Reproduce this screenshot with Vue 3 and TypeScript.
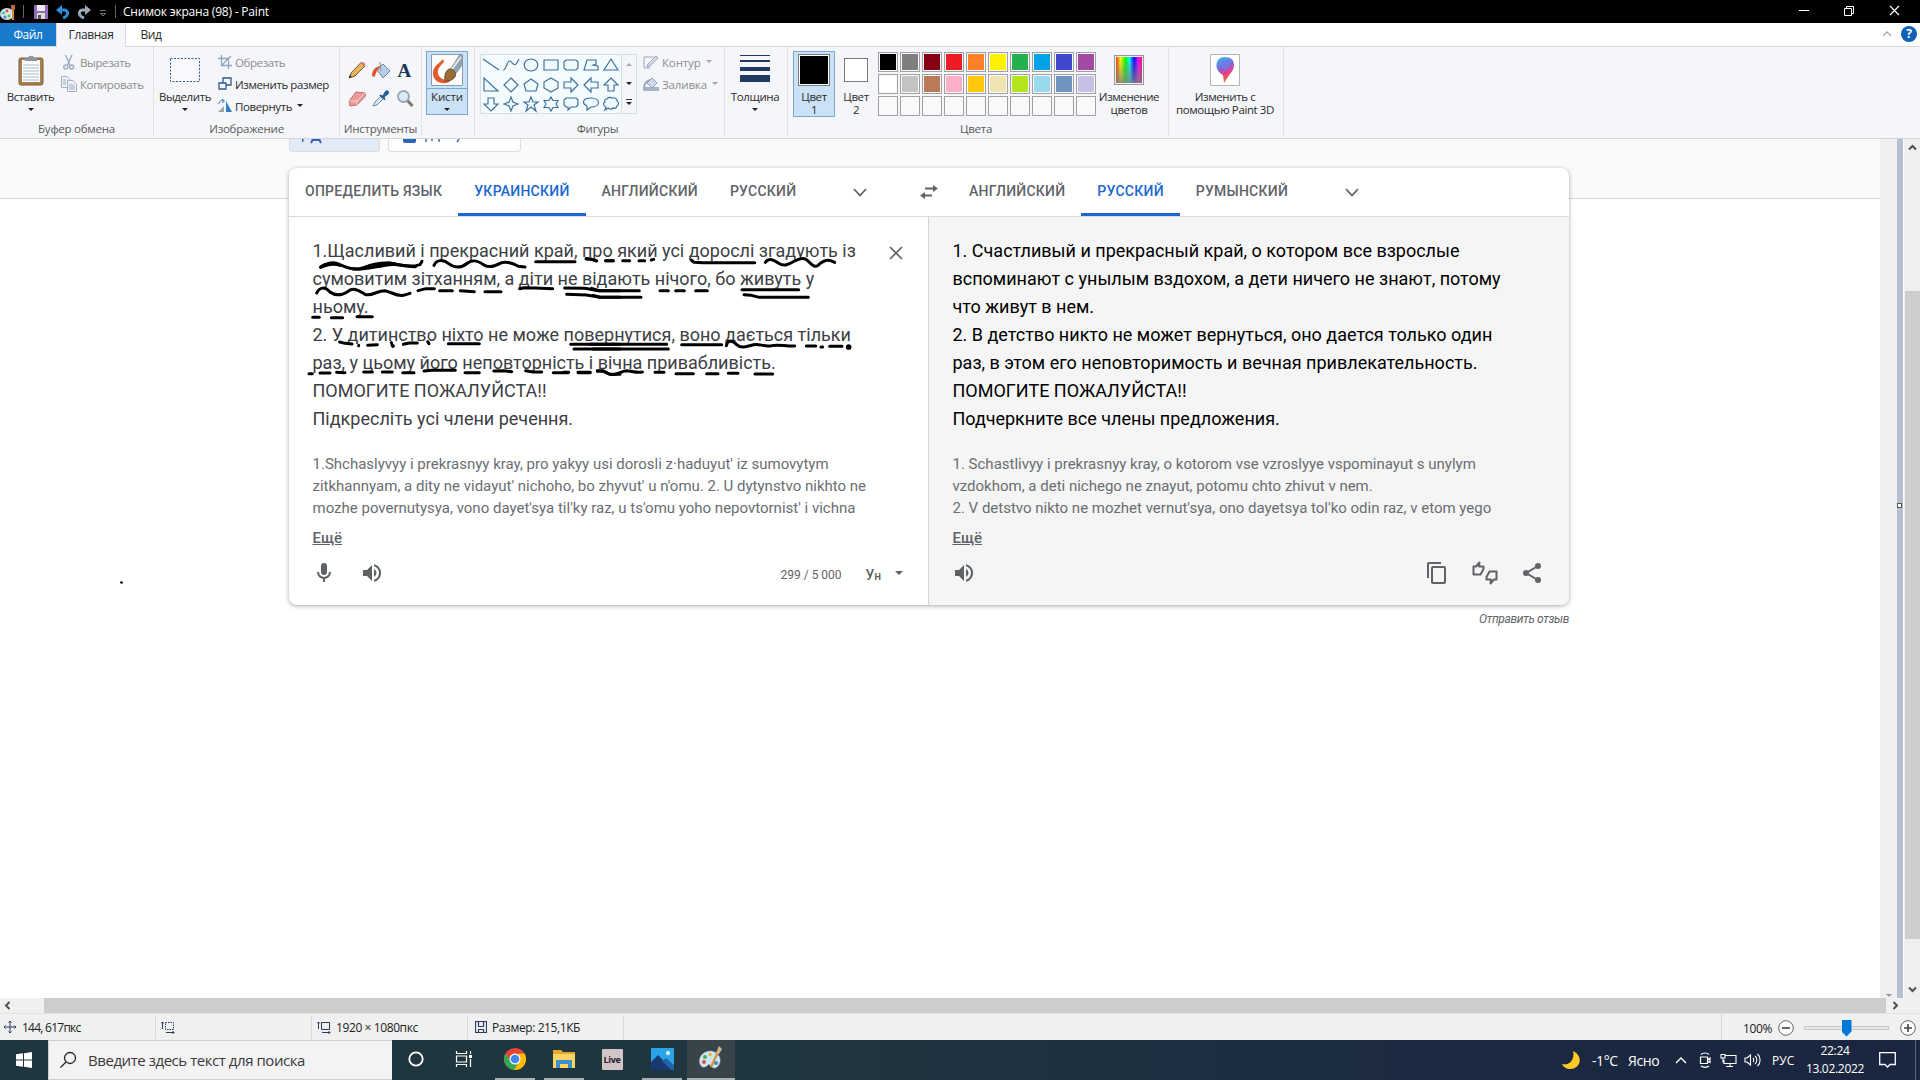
<script setup lang="ts">
const palette: string[][] = [
  ['#000000', '#7f7f7f', '#880015', '#ed1c24', '#ff7f27', '#fff200', '#22b14c', '#00a2e8', '#3f48cc', '#a349a4'],
  ['#ffffff', '#c3c3c3', '#b97a57', '#ffaec9', '#ffc90e', '#efe4b0', '#b5e61d', '#99d9ea', '#7092be', '#c8bfe7'],
  ['', '', '', '', '', '', '', '', '', ''],
]

const shapes: string[] = [
  'M2 4L18 15',
  'M2 15C5 16 6 5 9 6S13 15 18 4',
  'M10 4C19 4 19 16 10 16S1 4 10 4Z',
  'M3 5H17V15H3Z',
  'M5 5H15L17 7V13L15 15H5L3 13V7Z',
  'M6 5H15V9L12 10L17 11V15H3Z',
  'M10 4L17 15H3Z',
  'M3 3V16H17Z',
  'M10 3L17 10L10 17L3 10Z',
  'M10 4L17 9L15 16H5L3 9Z',
  'M10 3L17 7V13L10 17L3 13V7Z',
  'M3 7H10V3L17 10L10 17V13H3Z',
  'M17 7H10V3L3 10L10 17V13H17Z',
  'M7 16V10H3L10 3L17 10H13V16Z',
  'M7 4V10H3L10 17L17 10H13V4Z',
  'M10 3L12 8L17 10L12 12L10 17L8 12L3 10L8 8Z',
  'M10 3L12 8H17L13 11L15 17L10 13L5 17L7 11L3 8H8Z',
  'M10 3L12 6.5H17L15 10L17 13.5H12L10 17L8 13.5H3L5 10L3 6.5H8Z',
  'M5 4H15L17 6V11L15 13H10L7 16V13H5L3 11V6Z',
  'M10 4C20 4 20 13 10 13L6 16V12C0 9 2 4 10 4Z',
  'M6 5C7 3 10 3 11 4C14 3 16 5 16 7C18 8 18 11 16 12C16 14 13 15 12 14C10 16 8 15 7 14L4 16L5 13C2 12 2 9 4 8C3 6 4 5 6 5Z',
]

const sourceLines: string[] = [
  '1.Щасливий і прекрасний край, про який усі дорослі згадують із',
  'сумовитим зітханням, а діти не відають нічого, бо живуть у',
  'ньому.',
  '2. У дитинство ніхто не може повернутися, воно дається тільки',
  'раз, у цьому його неповторність і вічна привабливість.',
  'ПОМОГИТЕ ПОЖАЛУЙСТА!!',
  'Підкресліть усі члени речення.',
]
const targetLines: string[] = [
  '1. Счастливый и прекрасный край, о котором все взрослые',
  'вспоминают с унылым вздохом, а дети ничего не знают, потому',
  'что живут в нем.',
  '2. В детство никто не может вернуться, оно дается только один',
  'раз, в этом его неповторимость и вечная привлекательность.',
  'ПОМОГИТЕ ПОЖАЛУЙСТА!!',
  'Подчеркните все члены предложения.',
]
const sourceTranslit: string[] = [
  "1.Shchaslyvyy i prekrasnyy kray, pro yakyy usi dorosli z·haduyut' iz sumovytym",
  "zitkhannyam, a dity ne vidayut' nichoho, bo zhyvut' u n'omu. 2. U dytynstvo nikhto ne",
  "mozhe povernutysya, vono dayet'sya til'ky raz, u ts'omu yoho nepovtornist' i vichna",
]
const targetTranslit: string[] = [
  '1. Schastlivyy i prekrasnyy kray, o kotorom vse vzroslyye vspominayut s unylym',
  'vzdokhom, a deti nichego ne znayut, potomu chto zhivut v nem.',
  "2. V detstvo nikto ne mozhet vernut'sya, ono dayetsya tol'ko odin raz, v etom yego",
]

/* brush strokes, in thirds of a pixel */
const strokesLeft: string[] = [
  'M92 111C105 100 130 94 148 103C165 111 185 119 207 117C230 110 270 98 300 100C330 104 350 112 378 107L390 104L396 94',
  'M92 112C110 104 130 98 150 106M190 117C230 120 260 108 300 104C335 102 350 110 376 110M225 112C250 100 280 98 300 99L330 105',
  'M432 106C440 88 460 88 476 101C495 115 515 114 533 99C548 88 567 93 582 105C600 116 620 106 635 98C655 93 670 100 685 109L705 111',
  'M737 95H855',
  'M888 86L905 88L920 93M947 92H970',
  'M80 189C90 170 105 170 120 186C140 201 160 194 177 182C195 172 208 183 225 193C245 200 260 182 285 182C305 186 318 199 340 196L360 190',
  'M384 182L408 176H433M449 182H487M511 182L553 185M585 185H633',
  'M689 176L702 173L735 174L788 176',
  'M824 174L885 175L925 182H990M830 193L890 195L930 202H990',
  'M68 262H88M124 263H158M201 260H247',
  'M149 336L165 340L186 342M206 346V347M233 346L262 344M304 338L308 349M310 347V349M340 343L358 339H382M413 335L417 341',
  'M475 341H568',
  'M842 343H990M852 357H990',
  'M57 431H67M90 429H120M140 427L165 428M221 426H247M277 426H307M338 428H372M402 423L425 421H496M525 428H568M611 423L640 422L665 425M707 422L730 426H755M790 428H834M865 428H900M922 422L940 424L960 433H990',
]
const strokesRight: string[] = [
  'M80 86L95 88L109 92M137 92H160M188 92H209M237 92H254M274 90L281 88',
  'M394 90L402 97L430 98H584',
  'M616 97C628 82 642 90 656 100C674 112 690 101 704 93C720 84 735 82 745 94C756 104 764 114 774 106C786 95 799 88 812 92L824 97',
  'M95 175L118 182H238M100 196L122 202H243',
  'M300 182H325M347 182H373M407 182H442',
  'M546 179H716M552 194L574 196L598 202H745',
  'M90 343H320M100 357H325',
  'M365 344H485',
  'M499 347C502 330 518 330 530 344C545 358 562 348 580 344C600 340 610 351 635 347C655 342 675 349 704 348',
  'M739 348H767M783 351H788M809 349H846',
  'M10 427H26M54 427H91M112 424L128 422L148 432C165 440 180 424 199 422C215 423 230 430 247 426M285 427H312M348 431H400M440 431H474M505 430H534M585 432H638',
]
</script>

<template>
  <div class="screen">
    <header class="titlebar">
      <svg class="tb-app" width="16" height="18" viewBox="0 0 16 18"><ellipse cx="7" cy="11" rx="7" ry="6" fill="#cfe4ee" /><circle cx="3.500" cy="10" r="1.500" fill="#3c9" /><circle cx="7" cy="8" r="1.400" fill="#e44" /><circle cx="5" cy="14" r="1.600" fill="#48c" /><circle cx="9" cy="13" r="1.400" fill="#7b3" /><path d="M13 17V7" stroke="#d98b3a" stroke-width="2" /><path d="M11 2H15V7H11Z" fill="#b86b3c" /></svg>
      <i class="tb-sep"></i>
      <svg class="tb-save" width="14" height="14" viewBox="0 0 14 14"><path d="M0 0H14V14H0Z" fill="#8d6bb5" /><path d="M3 0H11V6H3Z" fill="#f0eaf6" /><path d="M3 8H11V14H3Z" fill="#ddd" /><path d="M4 10H7V14H4Z" fill="#554" /></svg>
      <svg class="tb-undo" width="14" height="14" viewBox="0 0 14 14"><path d="M3 5H8C13 5 13 11 7 13" fill="none" stroke="#2d8fd8" stroke-width="3" /><path d="M0 5L6 0V10Z" fill="#2d8fd8" /></svg>
      <svg class="tb-redo" width="14" height="14" viewBox="0 0 14 14"><path d="M11 5H6C1 5 1 11 7 13" fill="none" stroke="#9aa9bb" stroke-width="3" /><path d="M14 5L8 0V10Z" fill="#9aa9bb" /></svg>
      <svg class="tb-more" width="8" height="8" viewBox="0 0 8 8"><path d="M1 .5H7M1.500 3.500H6.500L4 6Z" fill="none" stroke="#777" /></svg>
      <i class="tb-sep tb-sep2"></i>
      <span class="tb-title">Снимок экрана (98) - Paint</span>
      <svg class="tb-controls" width="102" height="12" viewBox="0 0 102 12"><g fill="none" stroke="#fff"><path d="M0 6.500H10" /><path d="M45.500 4.500H52.500V11.500H45.500ZM47.500 4.500V2.500H54.500V9.500H52.500" /><path d="M91 2L100 11M100 2L91 11" stroke-width="1.200" /></g></svg>
    </header>

    <nav class="tabs">
      <span class="tab file">Файл</span>
      <span class="tab home">Главная</span>
      <span class="tab view">Вид</span>
      <svg class="fold" width="10" height="6" viewBox="0 0 10 6"><path d="M1 5L5 1L9 5" fill="none" stroke="#aaa" stroke-width="1.300" /></svg>
      <span class="help">?</span>
    </nav>

    <section class="ribbon">
      <div class="group g-clip">
        <div class="row">
          <div class="big b-paste">
            <svg width="26" height="32" viewBox="0 0 26 32"><rect x="1" y="4" width="24" height="27" rx="2" fill="#a8804f" stroke="#7f5d36" /><path d="M4 6H22V28H4Z" fill="#fdfdfd" /><path d="M5 11H21M5 14H21M5 17H21M5 20H21M5 23H21M5 26H21" stroke="#a9bcd2" /><path d="M7 7V4H10C10 1 16 1 16 4H19V7Z" fill="#8e959e" /></svg>
            <span>Вставить</span><i class="caret"></i>
          </div>
          <div class="col c-clip">
            <div class="item off"><svg width="16" height="16" viewBox="0 0 16 16"><g fill="none" stroke="#a1b0c6" stroke-width="1.500"><path d="M4.500 1L9 11M11 1L6.500 11" /><circle cx="4.800" cy="13" r="2" /><circle cx="10.600" cy="13" r="2" /></g></svg><span>Вырезать</span></div>
            <div class="item off"><svg width="16" height="16" viewBox="0 0 16 16"><g fill="#eef1f6" stroke="#a1b0c6"><path d="M.5 .5H6L9.500 4V11.500H.5Z" /><path d="M6.500 4.500H12L15.500 8V15.500H6.500Z" /></g><path d="M8 9H13M8 11H14M8 13H14M2 4H5M2 6H5M2 8H5" stroke="#a1b0c6" /></svg><span>Копировать</span></div>
          </div>
        </div>
        <div class="gname">Буфер обмена</div>
      </div>

      <div class="group g-image">
        <div class="row">
          <div class="big b-select">
            <svg width="32" height="32" viewBox="0 0 32 32"><rect x="1.500" y="4.500" width="29" height="23" fill="#f7f9fc" stroke="#2f5f94" stroke-dasharray="2 1.500" /></svg>
            <span>Выделить</span><i class="caret"></i>
          </div>
          <div class="col c-image">
            <div class="item off"><svg width="14" height="14" viewBox="0 0 14 14"><path d="M3.500 0V10.500H14M0 3.500H10.500V14M3 11L13 1" fill="none" stroke="#91a3bd" stroke-width="1.300" /></svg><span>Обрезать</span></div>
            <div class="item"><svg width="14" height="14" viewBox="0 0 14 14"><g fill="#f5f6f9" stroke="#2c5a8c" stroke-width="1.300"><path d="M5 1H13V8H5Z" /><path d="M1 6H8V12H1Z" /></g></svg><span>Изменить размер</span></div>
            <div class="item"><svg width="14" height="14" viewBox="0 0 14 14"><path d="M0 13H6V7Z" fill="#9da6ae" /><path d="M8 2V13H14Z" fill="#2f83c5" /><path d="M1 5C1 2 3 1 6 2M4 0L6.500 2L4 4" fill="none" stroke="#3b78b0" /></svg><span>Повернуть</span><i class="caret side"></i></div>
          </div>
        </div>
        <div class="gname">Изображение</div>
      </div>

      <div class="group g-tools">
        <div class="tools">
          <svg viewBox="0 0 18 18"><path d="M1 17L3 12L13 1.500L17 5L7 15Z" fill="#e6b45c" stroke="#7d5a2c" /><path d="M13 1.500L15 1L17.500 3L16.500 5.500Z" fill="#d8787c" /><path d="M1 17L2 14L4 16Z" fill="#333" /></svg>
          <svg viewBox="0 0 18 18"><path d="M5 9L11 3L18 10L11 17Z" fill="#b9cde4" stroke="#6c86a8" /><path d="M9 10L8 1" stroke="#888" fill="none" /><path d="M0 15C0 9 3 6 8 5L6 9C4 10 4 13 2.500 16Z" fill="#e4532d" /></svg>
          <svg viewBox="0 0 18 18"><text x="1.500" y="16" class="letter">A</text></svg>
          <svg viewBox="0 0 18 18"><path d="M1 12L8 3L17 4L17.500 7L9 16L2 17Z" fill="#ea9a9b" stroke="#c06a6e" /><path d="M1 12L9 12L9 16M9 12L17 4" fill="none" stroke="#f7cccc" /></svg>
          <svg viewBox="0 0 18 18"><path d="M1 17L3 13L9 7L12 9L5 16Z" fill="#d9e6f2" stroke="#6d87a3" /><path d="M8 6L11 7L13 3C15 0 18 3 16 5L12 8L13 11L8 7Z" fill="#235f9c" stroke="#235f9c" /></svg>
          <svg viewBox="0 0 18 18"><path d="M10.500 10.500L16.500 17" stroke="#8b7368" stroke-width="3" /><circle cx="7.500" cy="7.500" r="5.500" fill="#d8e9f7" stroke="#9aa7b3" stroke-width="1.800" /></svg>
        </div>
        <div class="gname">Инструменты</div>
      </div>

      <div class="group g-brush">
        <div class="brush">
          <svg width="32" height="32" viewBox="0 0 32 32"><path d="M.5 .5H31.500V31.500H.5Z" fill="#fdfdfd" stroke="#8c99a8" /><path d="M12 5C9 9 1.500 12 2 20C2.500 27 9 30 15 29C18 28.500 20 27 20 25C16 27 11 26 8 22C5 17 8 13 13 8Z" fill="#e2592c" /><path d="M19 15L28 1H31V12L25 20Z" fill="#8fa0b0" /><path d="M21 15L30 3" stroke="#e2e8ee" stroke-width="2" /><path d="M14 27C13 20 16 14 20 15C26 17 26 24 20 26C18 27 16 27 14 27Z" fill="#9a6c34" stroke="#6a4a25" /></svg>
          <div class="brush-label"><span>Кисти</span><i class="caret"></i></div>
        </div>
      </div>

      <div class="group g-shapes">
        <div class="row">
          <div class="gallery">
            <div class="shapegrid">
              <svg v-for="(d, i) in shapes" :key="i" viewBox="0 0 20 20"><path :d="d" fill="#f0f9fe" stroke="#3f6f96" stroke-width="1.150" /></svg>
            </div>
            <div class="gscroll"><i class="up"></i><i class="caret"></i><i class="caret bar"></i></div>
          </div>
          <div class="col c-shape">
            <div class="item off"><svg width="16" height="14" viewBox="0 0 16 14"><path d="M11 2H1V13H7" fill="none" stroke="#9aa9bf" /><path d="M4 12L5 9L13 1L15 3L7 11Z" fill="#d3dae5" stroke="#9aa9bf" /></svg><span class="wide">Контур</span><i class="caret side"></i></div>
            <div class="item off"><svg width="16" height="14" viewBox="0 0 16 14"><path d="M0 10H16V14H0Z" fill="#a6b3c8" /><path d="M4 6L9 1L14 6L9 11Z" fill="#d3dae5" stroke="#8fa0b8" /><path d="M1 10C2 5 4 4 7 3" fill="none" stroke="#9aa9bf" stroke-width="2" /></svg><span class="wide">Заливка</span><i class="caret side"></i></div>
          </div>
        </div>
        <div class="gname">Фигуры</div>
      </div>

      <div class="group g-size">
        <div class="big">
          <svg width="30" height="32" viewBox="0 0 30 32"><path d="M0 1H30V2H0ZM0 6H30V8H0ZM0 13H30V17H0ZM0 21H30V28H0Z" fill="#213a61" /></svg>
          <span>Толщина</span><i class="caret"></i>
        </div>
      </div>

      <div class="group g-colors">
        <div class="row">
          <div class="color on"><i class="sw s1"></i><span>Цвет<br />1</span></div>
          <div class="color"><i class="sw s2"></i><span>Цвет<br />2</span></div>
          <div class="palette">
            <template v-for="(line, r) in palette" :key="r">
              <i v-for="(c, k) in line" :key="k" class="cell"><b :style="{ background: c }"></b></i>
            </template>
          </div>
          <div class="edit"><i class="rainbow"></i><span>Изменение<br />цветов</span></div>
        </div>
        <div class="gname">Цвета</div>
      </div>

      <div class="group g-3d">
        <div class="edit">
          <svg width="30" height="32" viewBox="0 0 30 32"><defs><linearGradient id="pin" x1="0" y1="0" x2=".3" y2="1"><stop offset="0" stop-color="#35c3ee" /><stop offset=".45" stop-color="#7a6be0" /><stop offset=".7" stop-color="#e0408f" /><stop offset="1" stop-color="#f36a30" /></linearGradient></defs><path d="M.5 .5H29.500V31.500H.5Z" fill="#fff" stroke="#b4b4b4" /><path d="M15 3C26 3 26 14 20 20L14 29L13 21C4 17 4 3 15 3Z" fill="url(#pin)" /><circle cx="15" cy="11" r="4" fill="#6e7be6" /></svg>
          <span>Изменить с<br />помощью Paint 3D</span>
        </div>
      </div>
    </section>

    <main class="work">
      <div class="viewport">
        <div class="page">
          <div class="pagehead">
            <div class="mode on"><svg width="24" height="5" viewBox="0 0 24 5"><path d="M1 0L0 3M9 4L11 0H17L19 4M11 1H17" fill="none" stroke="#3a66b0" stroke-width="2" /></svg></div>
            <div class="mode"><i class="docicon"></i><svg width="40" height="4" viewBox="0 0 40 4"><path d="M1 0V3M7 0V2M14 0V3M34 0L32 3" stroke="#3f6fb5" stroke-width="1.500" /></svg></div>
          </div>

          <div class="card">
            <div class="langs">
              <div class="lhalf">
                <span class="lang">ОПРЕДЕЛИТЬ ЯЗЫК</span><span class="lang active">УКРАИНСКИЙ</span><span class="lang">АНГЛИЙСКИЙ</span><span class="lang">РУССКИЙ</span>
                <svg class="chev" width="14" height="9" viewBox="0 0 14 9"><path d="M1 1L7 7.500L13 1" fill="none" stroke="#5f6368" stroke-width="1.800" /></svg>
              </div>
              <svg class="swap" width="18" height="14" viewBox="0 0 18 14"><path d="M5 3.500H14M4 10.500H12" stroke="#5f6368" stroke-width="2" /><path d="M13 0L18 3.500L13 7ZM5 7L0 10.500L5 14Z" fill="#5f6368" /></svg>
              <div class="rhalf">
                <span class="lang">АНГЛИЙСКИЙ</span><span class="lang active">РУССКИЙ</span><span class="lang">РУМЫНСКИЙ</span>
                <svg class="chev" width="14" height="9" viewBox="0 0 14 9"><path d="M1 1L7 7.500L13 1" fill="none" stroke="#5f6368" stroke-width="1.800" /></svg>
              </div>
            </div>
            <div class="panes">
              <div class="pane source">
                <div class="text"><div v-for="l in sourceLines" :key="l">{{ l }}</div></div>
                <svg class="clear" width="14" height="14" viewBox="0 0 14 14"><path d="M1 1L13 13M13 1L1 13" stroke="#5f6368" stroke-width="1.700" /></svg>
                <div class="translit"><div v-for="l in sourceTranslit" :key="l">{{ l }}</div></div>
                <div class="more">Ещё</div>
                <div class="actions">
                  <svg class="mic" width="24" height="24" viewBox="0 0 24 24"><path d="M12 14a3 3 0 0 0 3-3V5a3 3 0 0 0-6 0v6a3 3 0 0 0 3 3zm5-3a5 5 0 0 1-10 0H5c0 3.500 2.600 6.400 6 6.900V21h2v-3.100c3.400-.5 6-3.400 6-6.900h-2z" fill="#5f6368" /></svg>
                  <svg class="spk" width="24" height="24" viewBox="0 0 24 24"><path d="M3 9v6h4l5 5V4L7 9H3zm13.500 3A4.500 4.500 0 0 0 14 8v8a4.500 4.500 0 0 0 2.500-4zM14 3.200v2.100a7 7 0 0 1 0 13.400v2.100a9 9 0 0 0 0-17.600z" fill="#5f6368" /></svg>
                  <span class="count">299 / 5 000</span>
                  <span class="key"><b>У</b>н</span><i class="caret kcaret"></i>
                </div>
              </div>
              <div class="pane target">
                <div class="text"><div v-for="l in targetLines" :key="l">{{ l }}</div></div>
                <div class="translit"><div v-for="l in targetTranslit" :key="l">{{ l }}</div></div>
                <div class="more">Ещё</div>
                <div class="actions">
                  <svg class="spk2" width="24" height="24" viewBox="0 0 24 24"><path d="M3 9v6h4l5 5V4L7 9H3zm13.500 3A4.500 4.500 0 0 0 14 8v8a4.500 4.500 0 0 0 2.500-4zM14 3.200v2.100a7 7 0 0 1 0 13.400v2.100a9 9 0 0 0 0-17.600z" fill="#5f6368" /></svg>
                  <svg class="copy" width="24" height="24" viewBox="0 0 24 24"><path d="M16 1H4a2 2 0 0 0-2 2v14h2V3h12V1zm3 4H8a2 2 0 0 0-2 2v14c0 1.100.9 2 2 2h11a2 2 0 0 0 2-2V7a2 2 0 0 0-2-2zm0 16H8V7h11v14z" fill="#5f6368" /></svg>
                  <svg class="rate" width="26" height="24" viewBox="0 0 26 24"><g fill="none" stroke="#5f6368" stroke-width="2" stroke-linejoin="round"><path d="M1.500 5.500V13.500H8.500L11.500 8V5.500H7L7.500 1.500L4 5.500Z" /><path d="M24.500 18.500V10.500H17.500L14.500 16V18.500H19L18.500 22.500L22 18.500Z" /></g></svg>
                  <svg class="share" width="24" height="24" viewBox="0 0 24 24"><path d="M18 5L6 12L18 19" fill="none" stroke="#5f6368" stroke-width="2" /><g fill="#5f6368"><circle cx="18" cy="5" r="3" /><circle cx="6" cy="12" r="3" /><circle cx="18" cy="19" r="3" /></g></svg>
                </div>
              </div>
            </div>
          </div>
          <div class="feedback">Отправить отзыв</div>
        </div>
        <div class="innerbar"><i class="caret"></i></div>
        <div class="edge"><i class="grip"></i></div>
        <div class="vbar">
          <svg width="9" height="7" viewBox="0 0 9 7"><path d="M1 5.500L4.500 2L8 5.500" fill="none" stroke="#505050" stroke-width="2" /></svg>
          <i class="vthumb"></i>
          <svg width="9" height="7" viewBox="0 0 9 7"><path d="M1 1.500L4.500 5L8 1.500" fill="none" stroke="#505050" stroke-width="2" /></svg>
        </div>
        <svg class="ink" width="1880" height="859" viewBox="0 139 1880 859">
          <g fill="none" stroke="#000" stroke-width="9" stroke-linecap="round" stroke-linejoin="round">
            <g transform="translate(290 230) scale(.33333)"><path v-for="d in strokesLeft" :key="d" :d="d" /></g>
            <g transform="translate(560 230) scale(.33333)"><path v-for="d in strokesRight" :key="d" :d="d" /><circle cx="866" cy="351" r="4" fill="#000" /></g>
          </g>
          <circle cx="121.500" cy="582.500" r="1.300" />
        </svg>
      </div>
      <div class="hbar">
        <svg width="7" height="9" viewBox="0 0 7 9"><path d="M5.500 1L2 4.500L5.500 8" fill="none" stroke="#505050" stroke-width="2" /></svg>
        <i class="hthumb"></i>
        <svg width="7" height="9" viewBox="0 0 7 9"><path d="M1.500 1L5 4.500L1.500 8" fill="none" stroke="#505050" stroke-width="2" /></svg>
      </div>
    </main>

    <div class="status">
      <div class="st"><svg width="12" height="12" viewBox="0 0 12 12"><path d="M6 0V12M0 6H12M4.500 1.500L6 0L7.500 1.500M4.500 10.500L6 12L7.500 10.500M1.500 4.500L0 6L1.500 7.500M10.500 4.500L12 6L10.500 7.500" fill="none" stroke="#2a3c5c" /></svg><span class="pos">144, 617пкс</span></div>
      <div class="st"><svg width="14" height="13" viewBox="0 0 14 13"><path d="M1.500 1V8M0 2.500L1.500 1L3 2.500M5 11.500H13M11.500 10L13 11.500L11.500 13" fill="none" stroke="#2a3c5c" /><path d="M4.500 1.500H12.500V8.500H4.500Z" fill="none" stroke="#2a3c5c" stroke-dasharray="1.500 1" /></svg></div>
      <div class="st"><svg width="14" height="13" viewBox="0 0 14 13"><path d="M1.500 1V8M0 2.500L1.500 1L3 2.500M5 11.500H13M11.500 10L13 11.500L11.500 13M4.500 1.500H12.500V8.500H4.500Z" fill="none" stroke="#2a3c5c" /></svg><span>1920 × 1080пкс</span></div>
      <div class="st disk"><svg width="12" height="12" viewBox="0 0 12 12"><path d="M.5 .5H11.500V11.500H.5ZM3.500 .5V5.500H8.500V.5M3.500 11V8.500H8.500V11" fill="none" stroke="#2a3c5c" stroke-width="1.200" /></svg><span>Размер: 215,1КБ</span></div>
      <div class="zoomarea">
        <span>100%</span>
        <svg width="16" height="16" viewBox="0 0 16 16"><circle cx="8" cy="8" r="7.300" fill="#fcfcfc" stroke="#666" /><path d="M4 8H12" stroke="#444" stroke-width="1.600" /></svg>
        <div class="slider"><i></i></div>
        <svg width="16" height="16" viewBox="0 0 16 16"><circle cx="8" cy="8" r="7.300" fill="#fcfcfc" stroke="#666" /><path d="M4 8H12M8 4V12" stroke="#444" stroke-width="1.600" /></svg>
      </div>
    </div>

    <footer class="taskbar">
      <div class="start"><svg width="16" height="16" viewBox="0 0 16 16"><path d="M0 2.300L7 1.300V7.500H0ZM8 1.200L16 0V7.500H8ZM0 8.500H7V14.700L0 13.700ZM8 8.500H16V16L8 14.800Z" fill="#fff" /></svg></div>
      <div class="search"><svg width="18" height="18" viewBox="0 0 18 18"><circle cx="11" cy="7" r="5.500" fill="none" stroke="#222" stroke-width="1.300" /><path d="M7 11L1.500 16.500" stroke="#222" stroke-width="1.300" /></svg><span>Введите здесь текст для поиска</span></div>
      <div class="tk"><svg width="18" height="18" viewBox="0 0 18 18"><circle cx="9" cy="9" r="6.700" fill="none" stroke="#fff" stroke-width="1.800" /></svg></div>
      <div class="tk"><svg width="18" height="18" viewBox="0 0 18 18"><path d="M1.500 1V3.500H11.500V1M1.500 6H11.500V12H1.500ZM1.500 17V14.500H11.500V17M15.500 1V4M15.500 9V17" fill="none" stroke="#fff" stroke-width="1.200" /><path d="M14 5H17V8H14Z" fill="#fff" /></svg></div>
      <div class="tk run t-chrome"><svg width="24" height="24" viewBox="0 0 24 24"><circle cx="12" cy="12" r="11" fill="#e94335" /><path d="M2.500 6.500A11 11 0 0 0 11 23L16 14.500L12 12L8 14Z" fill="#34a853" /><path d="M21.500 6.500A11 11 0 0 1 11 23L16.500 14L15 6.500Z" fill="#fbbc05" /><circle cx="12" cy="12" r="5.500" fill="#fff" /><circle cx="12" cy="12" r="4.300" fill="#4285f4" /></svg></div>
      <div class="tk run t-folder"><svg width="22" height="20" viewBox="0 0 22 20"><path d="M0 1H8L10 3H22V19H0Z" fill="#e5a82d" /><path d="M0 5H22V19H0Z" fill="#fcd462" /><path d="M3 19V11H19V19H15V15H7V19Z" fill="#3d8fd0" /></svg></div>
      <div class="tk t-live"><span class="live">Live</span></div>
      <div class="tk run t-photo"><svg width="23" height="22" viewBox="0 0 23 22"><path d="M0 0H23V22H0Z" fill="#2aa4e8" /><path d="M0 14L7 7L22 22H0Z" fill="#173a73" /><path d="M11 13L15 10L23 17V22H20Z" fill="#1f63ad" /><circle cx="17" cy="5" r="2" fill="#fff" /></svg></div>
      <div class="tk run t-paint"><svg width="26" height="26" viewBox="0 0 26 26"><path d="M13 5C4 5 0 12 2 18C4 23 8 21 10 19C12 17 14 23 17 22C24 20 25 7 13 5Z" fill="#cfe6ef" stroke="#9ab7c4" stroke-width=".6" /><circle cx="7" cy="11" r="2" fill="#3fae6b" /><circle cx="12" cy="8.500" r="1.800" fill="#e7b33a" /><circle cx="6" cy="16" r="1.900" fill="#dd4a3c" /><circle cx="18" cy="17" r="2" fill="#3f86cc" /><path d="M13 21L20 6" stroke="#d8923d" stroke-width="2.400" /><path d="M18 7L21 0L24 3L21 8Z" fill="#d8b48a" /></svg></div>

      <div class="tray">
        <svg class="moon" width="20" height="20" viewBox="0 0 20 20"><path d="M12 1C19 4 21 12 16 16.500C11 21 3 19 1 14C9 16 14 9 12 1Z" fill="#ffc928" /></svg>
        <span class="temp">-1°C</span><span class="sky">Ясно</span>
        <svg class="tup" width="12" height="8" viewBox="0 0 12 8"><path d="M1 7L6 2L11 7" fill="none" stroke="#fff" stroke-width="1.400" /></svg>
        <svg class="meet" width="12" height="16" viewBox="0 0 12 16"><path d="M1.500 5H8.500V11.500H1.500ZM8.500 7.500L11 6V10.500L8.500 9M2 2.500C4 .5 8 .5 10 2.500M2 14C4 15.700 8 15.700 10 14" fill="none" stroke="#fff" stroke-width="1.200" /></svg>
        <svg class="net" width="17" height="15" viewBox="0 0 17 15"><path d="M5 2.500H16V10.500H4V7M10 10.500V13.500M6 13.500H13M1 1.500H5V5H1ZM3 5V9H4" fill="none" stroke="#fff" stroke-width="1.100" /></svg>
        <svg class="vol" width="17" height="14" viewBox="0 0 17 14"><path d="M1 5V9H3L6.500 12V2L3 5ZM9 5C10 6 10 8 9 9M11 3C13.500 5 13.500 9 11 11M13.500 1C17 4 17 10 13.500 13" fill="none" stroke="#fff" stroke-width="1.100" /></svg>
        <span class="kb">РУС</span>
        <div class="clock"><span>22:24</span><span>13.02.2022</span></div>
        <svg class="note" width="17" height="16" viewBox="0 0 17 16"><path d="M.7 .7H16.300V12.500H11L8.500 15L6 12.500H.7Z" fill="none" stroke="#fff" stroke-width="1.300" /></svg>
        <i class="peek"></i>
      </div>
    </footer>
  </div>
</template>

<style>
html, body { margin: 0; overflow: hidden; background: #fff; }
</style>

<style scoped>
* { box-sizing: border-box; }
svg { display: block; flex: none; }
.screen { width: 1920px; height: 1080px; overflow: hidden; display: flex; flex-direction: column; font: 12px/13px "Open Sans", "Noto Sans", sans-serif; color: #2b2b2b; white-space: nowrap; }
.caret { display: block; width: 0; height: 0; border: 3px solid transparent; border-top-color: #222; border-bottom: 0; flex: none; }

.titlebar { height: 23px; background: #000; display: flex; align-items: center; color: #fff; flex: none; }
.tb-sep { width: 1px; height: 13px; background: #666; margin-left: 7px; }
.tb-sep2 { margin-left: 8px; }
.tb-save { margin-left: 10px; }
.tb-undo { margin-left: 8px; }
.tb-redo { margin-left: 7px; }
.tb-more { margin: 5px 0 0 8px; }
.tb-title { margin-left: 7px; letter-spacing: -.2px; }
.tb-controls { margin: -3px 19px 0 auto; }

.tabs { height: 24px; background: #fff; display: flex; align-items: stretch; border-bottom: 1px solid #d5d8dd; flex: none; line-height: 23px; letter-spacing: -.4px; }
.tab { text-align: center; }
.file { width: 56px; background: #1979ca; color: #fff; }
.home { width: 70px; background: #f5f6f9; border: 1px solid #dadbdc; border-width: 0 1px; margin-bottom: -1px; }
.view { width: 50px; }
.fold { margin: 8px 9px 0 auto; }
.help { width: 16px; height: 16px; margin: 3px 3px 0 0; border-radius: 50%; background: #0f61b5; color: #fff; font-weight: 700; line-height: 16px; text-align: center; }

.ribbon { height: 92px; background: #f5f6f9; border-bottom: 1px solid #d3d5d9; display: flex; flex: none; font-size: 11.500px; letter-spacing: -.4px; }
.group { height: 89px; border-right: 1px solid #e0e2e5; display: flex; flex-direction: column; padding-top: 4px; flex: none; }
.g-clip { width: 154px; }
.g-image { width: 186px; }
.g-tools { width: 82px; }
.g-brush { width: 53px; padding-left: 4px; }
.g-shapes { width: 250px; padding-left: 5px; }
.g-shapes .gname { margin-right: 9px; }
.g-size { width: 63px; padding-right: 2px; }
.g-colors { width: 381px; padding-left: 5px; }
.g-colors .gname { margin-right: 9px; }
.g-3d { width: 115px; padding-right: 2px; }
.row { display: flex; height: 70px; }
.gname { text-align: center; margin-top: auto; color: #5a5a5a; line-height: 14px; letter-spacing: -.25px; }
.big { display: flex; flex-direction: column; align-items: center; padding-top: 3px; }
.big span { margin: 4px 0 5px; }
.b-paste { width: 61px; }
.b-select { width: 60px; margin-left: 1px; }
.item { height: 22px; display: flex; align-items: center; }
.item svg { margin-right: 3px; }
.item .side { margin-left: 5px; margin-top: -2px; }
.off { color: #8d8d8d; }
.off .caret { border-top-color: #a5a5a5; }
.c-image { margin-left: 3px; }
.c-image svg { margin-right: 3px; }
.tools { display: grid; grid-template-columns: repeat(3, 18px); column-gap: 6px; row-gap: 10px; margin: 10px 0 0 8px; }
.tools svg { width: 18px; height: 18px; }
.letter { font: 700 19px "Liberation Serif", serif; fill: #1d3557; letter-spacing: 0; }
.brush { width: 42px; height: 64px; border: 1px solid #7aa8d6; background: #cbe1f6; display: flex; flex-direction: column; align-items: center; padding-top: 2px; }
.brush-label { border-top: 1px solid #7aa8d6; width: 100%; flex: 1; margin-top: 2px; display: flex; flex-direction: column; align-items: center; padding-top: 1px; }
.brush-label span { letter-spacing: -.1px; }
.brush-label .caret { margin-top: 5px; }
.gallery { width: 157px; height: 60px; margin-top: 3px; border: 1px solid #d5dde6; display: flex; background: #f4fbff; }
.shapegrid { display: grid; grid-template-columns: repeat(7, 20px); grid-auto-rows: 19.500px; width: 141px; }
.shapegrid svg { width: 20px; height: 20px; }
.gscroll { width: 15px; border-left: 1px solid #d5dde6; background: #f5f6f9; display: flex; flex-direction: column; align-items: center; justify-content: space-around; }
.up { width: 0; height: 0; border: 3px solid transparent; border-bottom-color: #aaa; border-top: 0; }
.bar { position: relative; }
.bar::before { content: ""; position: absolute; left: -3px; top: -6px; width: 6px; height: 1px; background: #333; }
.c-shape { margin-left: 6px; }
.c-shape svg { margin-right: 3px; }
.wide { letter-spacing: -.15px; }
.color { width: 42px; height: 66px; display: flex; flex-direction: column; align-items: center; text-align: center; border: 1px solid transparent; }
.color.on { background: #cbe1f6; border-color: #7aa8d6; }
.sw { border: 1px solid #7b7b7b; box-shadow: inset 0 0 0 1px #fff; }
.s1 { width: 32px; height: 32px; margin: 2px 0 4px; background: #000; }
.s2 { width: 24px; height: 24px; margin: 6px 0 8px; background: #fff; }
.palette { margin: 1px 0 0 1px; display: grid; grid-template-columns: repeat(10, 20px); grid-auto-rows: 20px; gap: 2px; }
.cell { border: 1px solid #a0a0a0; padding: 1px; display: flex; background: #f8f9fb; }
.cell b { flex: 1; }
.edit { display: flex; flex-direction: column; align-items: center; text-align: center; padding-top: 3px; }
.row .edit { width: 66px; }
.edit svg { margin-bottom: 4px; }
.rainbow { width: 30px; height: 30px; margin: 1px 0 5px; border: 1px solid #999; box-shadow: inset 0 0 0 1px #eee; background: linear-gradient(to bottom, transparent 0, rgba(128,128,128,.85) 100%), linear-gradient(to right, #f00, #ff0 20%, #0f0 38%, #0ff 52%, #00f 68%, #f0f 84%, #f04); }

.work { flex: none; height: 875px; display: flex; flex-direction: column; background: #f0f0f0; }
.viewport { height: 859px; display: flex; position: relative; }
.ink { position: absolute; left: 0; top: 0; }
.page { width: 1880px; background: #fff; font-family: Roboto, "Noto Sans", sans-serif; }
.pagehead { height: 60px; background: #fafafa; border-bottom: 1px solid #d8dadd; display: flex; padding-left: 289px; gap: 8px; }
.mode { height: 13px; border: 1px solid #dadce0; border-top: 0; border-radius: 0 0 4px 4px; width: 133px; background: #fff; display: flex; padding-left: 14px; }
.mode.on { width: 91px; background: #e3eaf7; padding-left: 12px; }
.docicon { width: 13px; height: 4px; background: #2a66b5; border-radius: 0 0 2px 2px; margin-right: 9px; }
.card { position: relative; margin: -31px 0 0 289px; width: 1280px; height: 437px; border-radius: 8px; background: #fff; box-shadow: 0 1px 4px rgba(60,64,67,.45); display: flex; flex-direction: column; overflow: hidden; }
.langs { height: 49px; border-bottom: 1px solid #dcdcdc; display: flex; flex: none; }
.lhalf { display: flex; width: 631px; }
.rhalf { display: flex; margin-left: 15px; }
.lang { padding: 0 16px; height: 48px; line-height: 47px; font-size: 14px; font-weight: 500; letter-spacing: .25px; color: #5f6368; border-bottom: 3px solid transparent; }
.active { color: #1967d2; border-color: #1967d2; }
.chev { margin: 20px 0 0 41px; }
.swap { margin-top: 17px; }
.panes { display: flex; flex: 1; }
.pane { width: 641px; padding: 20px 0 0 23.500px; position: relative; color: #3c4043; }
.source { width: 639px; }
.target { background: #f5f5f5; border-left: 1px solid #d5d5d5; color: #000; }
.text { font-size: 18px; line-height: 28px; }
.clear { position: absolute; left: 600px; top: 29px; }
.translit { margin-top: 20px; font-size: 15px; line-height: 22px; color: #6a6e72; }
.more { margin-top: 10px; font-size: 15px; line-height: 18px; font-weight: 500; text-decoration: underline; color: #5f6368; }
.actions { display: flex; align-items: center; height: 24px; margin-top: 14px; font-size: 12px; color: #5f6368; }
.spk { margin-left: 24px; }
.count { margin: 4px 0 0 397px; width: 62px; }
.key { margin: 5px 0 0 23px; width: 18px; font-size: 12px; font-weight: 500; }
.key b { font-size: 14px; font-weight: 500; }
.kcaret { margin-left: 11px; border-width: 4px 4px 0; border-top-color: #5f6368; }
.spk2 { margin-left: -1px; }
.copy { margin-left: 449px; }
.rate { margin-left: 23px; }
.share { margin-left: 22px; }
.feedback { width: 1569px; text-align: right; margin-top: 6px; font-size: 12px; line-height: 16px; letter-spacing: -.35px; font-style: italic; color: #5f6368; }
.mic { margin-left: -1px; }
.innerbar { width: 17px; background: #f0f0f0; display: flex; align-items: flex-end; justify-content: center; padding-bottom: 1px; }
.innerbar .caret { border-top-color: #999; }
.edge { width: 7px; border-right: 1px solid #fff; background: #b5bfd1; display: flex; align-items: center; }
.grip { width: 5px; height: 5px; background: #fff; border: 1px solid #555; margin: -126px 0 0 0; }
.vbar { width: 16px; background: #efefef; display: flex; flex-direction: column; align-items: center; padding: 5px 0 5px; }
.vthumb { width: 15px; height: 648px; background: #cdcdcd; margin: 140px 0 auto; }
.hbar { height: 16px; display: flex; align-items: center; padding: 0 22px 0 4px; background: #f0f0f0; border-bottom: 1px solid #e2e2e2; }
.hthumb { height: 15px; width: 1842px; background: #cdcdcd; margin: 0 6px 0 33px; flex: none; }

.status { height: 26px; flex: none; background: #f0f0f0; display: flex; color: #222; letter-spacing: -.4px; }
.st { width: 156px; height: 24px; margin-top: 1px; border-right: 1px solid #d8d8d8; display: flex; align-items: center; padding-left: 5px; }
.st:first-child { padding-left: 4px; }
.st svg { margin-right: 5px; }
.st.disk { padding-left: 7px; }
.st .pos { letter-spacing: -.75px; margin-left: 1px; }
.zoomarea { margin-left: auto; width: 199px; border-left: 1px solid #d8d8d8; display: flex; align-items: center; padding: 2px 0 0 21px; }
.zoomarea span { width: 35px; }
.slider { width: 85px; height: 4px; margin: 0 11px 0 10px; border: 1px solid #c8c8c8; background: #e8e8e8; display: flex; justify-content: center; align-items: center; }
.slider i { width: 10px; height: 17px; background: #0078d7; flex: none; clip-path: polygon(0 0, 100% 0, 100% 70%, 50% 100%, 0 70%); }

.taskbar { height: 40px; flex: none; display: flex; color: #fff; background: linear-gradient(to right, #20363f 0, #20363f 40%, #1b2941 78%, #1a2540 100%); }
.start { width: 48px; display: flex; align-items: center; justify-content: center; }
.search { width: 344px; background: #f3f3f3; color: #3a3a3a; display: flex; align-items: center; font-size: 15px; border: 1px solid #cfcfcf; border-right: 0; padding-left: 10px; }
.search span { margin-left: 11px; letter-spacing: -.45px; }
.tk { width: 48px; display: flex; align-items: center; justify-content: center; border-bottom: 2px solid transparent; background-clip: padding-box; }
.run { border-bottom-color: #a9b1b6; }
.t-chrome { width: 40px; margin: 0 4px 0 7px; }
.t-folder { width: 40px; margin: 0 4px 0 5px; }
.t-photo { width: 40px; margin: 0 5px 0 6px; }
.t-paint { background: #384449; }
.live { width: 21px; height: 21px; background: #d0c4c6; color: #222; font-size: 9px; font-weight: 700; line-height: 21px; text-align: center; border-radius: 1px; letter-spacing: -.3px; }
.tray { margin-left: auto; width: 360px; display: flex; align-items: center; font-size: 14px; }
.moon { margin-left: 1px; }
.temp { margin-left: 11px; width: 36px; font-size: 14px; letter-spacing: -.4px; }
.sky { width: 40px; letter-spacing: -.4px; }
.tup { margin-left: 7px; }
.meet { margin-left: 12px; }
.net { margin-left: 9px; }
.vol { margin-left: 7px; }
.kb { margin-left: 11px; width: 30px; font-size: 12px; }
.clock { width: 66px; display: flex; flex-direction: column; align-items: center; font-size: 12px; line-height: 18px; letter-spacing: -.3px; }
.note { margin-left: 11px; }
.peek { width: 1px; height: 40px; background: #5b6678; margin-left: auto; margin-right: 4px; }
</style>
